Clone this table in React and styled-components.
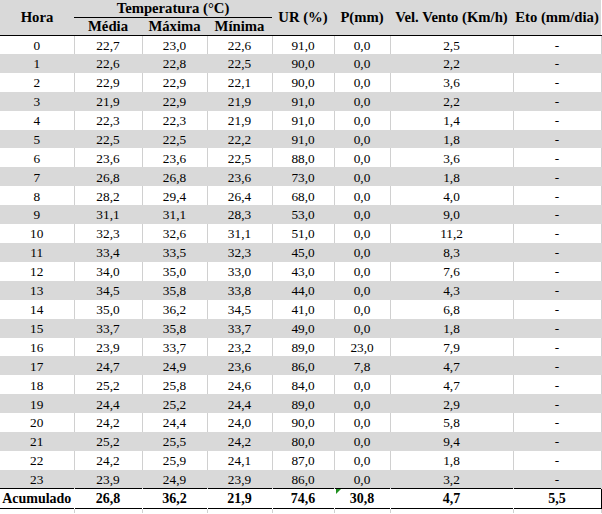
import React from "react";
import styled, { createGlobalStyle } from "styled-components";

const GlobalStyle = createGlobalStyle`
  html, body {
    margin: 0;
    padding: 0;
    background: #fff;
  }
  body {
    font-family: "Liberation Serif", "Times New Roman", serif;
    color: #000;
  }
`;

const rows = [
  ["22,7", "23,0", "22,6", "91,0", "0,0", "2,5"],
  ["22,6", "22,8", "22,5", "90,0", "0,0", "2,2"],
  ["22,9", "22,9", "22,1", "90,0", "0,0", "3,6"],
  ["21,9", "22,9", "21,9", "91,0", "0,0", "2,2"],
  ["22,3", "22,3", "21,9", "91,0", "0,0", "1,4"],
  ["22,5", "22,5", "22,2", "91,0", "0,0", "1,8"],
  ["23,6", "23,6", "22,5", "88,0", "0,0", "3,6"],
  ["26,8", "26,8", "23,6", "73,0", "0,0", "1,8"],
  ["28,2", "29,4", "26,4", "68,0", "0,0", "4,0"],
  ["31,1", "31,1", "28,3", "53,0", "0,0", "9,0"],
  ["32,3", "32,6", "31,1", "51,0", "0,0", "11,2"],
  ["33,4", "33,5", "32,3", "45,0", "0,0", "8,3"],
  ["34,0", "35,0", "33,0", "43,0", "0,0", "7,6"],
  ["34,5", "35,8", "33,8", "44,0", "0,0", "4,3"],
  ["35,0", "36,2", "34,5", "41,0", "0,0", "6,8"],
  ["33,7", "35,8", "33,7", "49,0", "0,0", "1,8"],
  ["23,9", "33,7", "23,2", "89,0", "23,0", "7,9"],
  ["24,7", "24,9", "23,6", "86,0", "7,8", "4,7"],
  ["25,2", "25,8", "24,6", "84,0", "0,0", "4,7"],
  ["24,4", "25,2", "24,4", "89,0", "0,0", "2,9"],
  ["24,2", "24,4", "24,0", "90,0", "0,0", "5,8"],
  ["25,2", "25,5", "24,2", "80,0", "0,0", "9,4"],
  ["24,2", "25,9", "24,1", "87,0", "0,0", "1,8"],
  ["23,9", "24,9", "23,9", "86,0", "0,0", "3,2"],
];

const totals = ["26,8", "36,2", "21,9", "74,6", "30,8", "4,7", "5,5"];

const widths = [74, 68, 65, 65, 62, 56, 123, 88];

const Sheet = styled.table`
  width: 601px;
  table-layout: fixed;
  border-collapse: collapse;
  font-size: 13.3px;
  line-height: 1;
`;

const HeadRow = styled.tr`
  background: #d9d9d9;
  height: ${(p) => p.$h}px;
`;

const HeadCell = styled.th`
  padding: 0;
  font-size: 14.7px;
  font-weight: bold;
  text-align: center;
  vertical-align: middle;
  white-space: nowrap;
  border-bottom: ${(p) => (p.$line ? "1px solid #000" : "none")};
  padding-top: ${(p) => p.$pt || 0}px;
`;

const BodyRow = styled.tr`
  height: 18.92px;
  background: ${(p) => (p.$shade ? "#d9d9d9" : "#fff")};
`;

const Cell = styled.td`
  padding: 0;
  text-align: center;
  vertical-align: middle;
  white-space: nowrap;
  padding-top: 1px;
  border-right: 1px solid ${(p) => (p.$shade ? "#d9d9d9" : "#d0d0d0")};
`;

const TotalRow = styled.tr`
  height: 20px;
  background: #fff;
  border-top: 1px solid #000;
  border-bottom: 1px solid #000;
`;

const TotalCell = styled.td`
  position: relative;
  padding: 0;
  padding-top: 1px;
  font-size: 14px;
  text-align: center;
  vertical-align: middle;
  font-weight: bold;
  white-space: nowrap;
  border-right: 1px solid ${(p) => (p.$last ? "#000" : "#fff")};

  &::before {
    content: "";
    display: ${(p) => (p.$flag ? "block" : "none")};
    position: absolute;
    top: 0;
    left: 1px;
    width: 0;
    height: 0;
    border-top: 5px solid #1f8f1f;
    border-right: 5px solid transparent;
  }
`;

const TailRow = styled.tr`
  height: 4px;
`;

const TailCell = styled.td`
  padding: 0;
  border-right: 1px solid #d0d0d0;
`;

export default function App() {
  return (
    <>
      <GlobalStyle />
      <Sheet>
        <colgroup>
          {widths.map((w, i) => (
            <col key={i} style={{ width: w }} />
          ))}
        </colgroup>
        <thead>
          <HeadRow $h={17}>
            <HeadCell rowSpan={2} $line>
              Hora
            </HeadCell>
            <HeadCell colSpan={3} $line>
              Temperatura (°C)
            </HeadCell>
            <HeadCell rowSpan={2} $line>
              UR (%)
            </HeadCell>
            <HeadCell rowSpan={2} $line>
              P(mm)
            </HeadCell>
            <HeadCell rowSpan={2} $line>
              Vel. Vento (Km/h)
            </HeadCell>
            <HeadCell rowSpan={2} $line>
              Eto (mm/dia)
            </HeadCell>
          </HeadRow>
          <HeadRow $h={18}>
            <HeadCell $line $pt={1}>Média</HeadCell>
            <HeadCell $line $pt={1}>Máxima</HeadCell>
            <HeadCell $line $pt={1}>Mínima</HeadCell>
          </HeadRow>
        </thead>
        <tbody>
          {rows.map((r, i) => {
            const shade = i % 2 === 1;
            return (
              <BodyRow key={i} $shade={shade}>
                <Cell $shade={shade}>{i}</Cell>
                {r.map((v, j) => (
                  <Cell key={j} $shade={shade}>
                    {v}
                  </Cell>
                ))}
                <Cell $shade={shade}>-</Cell>
              </BodyRow>
            );
          })}
          <TotalRow>
            <TotalCell>Acumulado</TotalCell>
            {totals.map((v, j) => (
              <TotalCell key={j} $flag={j === 4} $last={j === totals.length - 1}>
                {v}
              </TotalCell>
            ))}
          </TotalRow>
          <TailRow>
            {widths.map((w, i) => (
              <TailCell key={i} />
            ))}
          </TailRow>
        </tbody>
      </Sheet>
    </>
  );
}
